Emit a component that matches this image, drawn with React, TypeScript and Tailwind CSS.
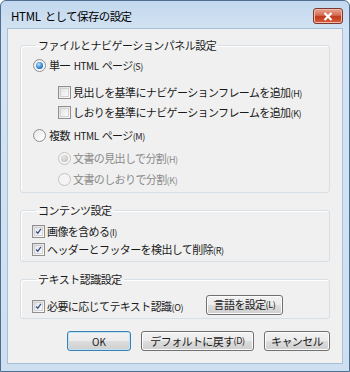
import React from 'react';

const font = "font-['Noto_Sans_CJK_JP','Noto_Sans',sans-serif]";

const Acc: React.FC<{ k: string }> = ({ k }) => (
  <span className="text-[9px] tracking-[-0.4px]">({k})</span>
);

const Radio: React.FC<{ checked?: boolean; disabled?: boolean }> = ({ checked, disabled }) => (
  <span
    className={`flex h-[13px] w-[13px] shrink-0 items-center justify-center rounded-full border ${
      disabled ? 'border-[#c4c4c4] bg-[#f4f4f4]' : 'border-[#8f8f8f] bg-[linear-gradient(135deg,#e8e8e8,#ffffff)]'
    }`}
  >
    {checked && (
      <span
        className={`h-[7px] w-[7px] rounded-full ${
          disabled
            ? 'bg-[radial-gradient(circle_at_40%_35%,#e6e6e6,#b8b8b8)]'
            : 'bg-[radial-gradient(circle_at_40%_35%,#b8e3ff,#1a6cc2_70%,#0f4f96)]'
        }`}
      />
    )}
  </span>
);

const Check: React.FC<{ checked?: boolean }> = ({ checked }) => (
  <span className="flex h-[13px] w-[13px] shrink-0 items-center justify-center border border-[#8f8f8f] bg-[linear-gradient(135deg,#dcdcdc,#ffffff)]">
    <span className="flex h-[9px] w-[9px] items-center justify-center border border-[#d2d2d2] bg-[linear-gradient(135deg,#e4e4e4,#fafafa)]">
      {checked && (
        <svg width="9" height="9" viewBox="0 0 9 9">
          <path d="M1.5 4.5 L3.6 6.8 L7.6 1.2" fill="none" stroke="#2f4f8f" strokeWidth="1.6" />
        </svg>
      )}
    </span>
  </span>
);

const Button: React.FC<{ className?: string; def?: boolean; children: React.ReactNode }> = ({ className, def, children }) => (
  <div
    className={`flex h-[20px] items-center justify-center rounded-[3px] border ${
      def
        ? 'border-[#3c7fb1] shadow-[inset_0_0_0_1px_#bfe3f7]'
        : 'border-[#707070] shadow-[inset_0_0_0_1px_#fcfcfc]'
    } bg-[linear-gradient(to_bottom,#f2f2f2_0%,#ebebeb_50%,#dddddd_51%,#cfcfcf_100%)] text-[11px] tracking-[-0.6px] text-[#1a1a1a] ${className ?? ''}`}
  >
    {children}
  </div>
);

const Group: React.FC<{ title: string; className?: string; children: React.ReactNode }> = ({ title, className, children }) => (
  <fieldset className={`rounded-[3px] border border-[#d5dfe5] px-[11px] pb-[3px] shadow-[inset_1px_1px_0_#ffffff] ${className ?? ''}`}>
    <legend className="ml-[4px] px-[2px] text-[11px] leading-[14px] tracking-[-0.5px] text-[#1a1a1a]">{title}</legend>
    {children}
  </fieldset>
);

export default function App() {
  return (
    <div className={`${font} flex h-[372px] w-[350px] flex-col rounded-t-[6px] border border-[#4d6f8f] bg-[linear-gradient(to_bottom,#c3d8ee,#d3e3f3_30px,#cddff1)]`}>
      <div className="flex h-[27px] shrink-0 items-center justify-between pl-[10px] pr-[6px]">
        <span className="pt-[5px] text-[11.5px] tracking-[-0.6px] text-[#000]">
          <span className="mr-[4px] tracking-[-0.3px]">HTML</span>として保存の設定
        </span>
        <div className="mt-[3px] flex h-[16px] w-[30px] items-center justify-center rounded-[3px] border border-[#7a3a30] bg-[linear-gradient(to_bottom,#e8a593,#d46b52_45%,#c0391b_55%,#d9613e)] shadow-[inset_0_0_0_1px_#f0b8a8]">
          <svg width="10" height="9" viewBox="0 0 10 9">
            <path d="M1.5 1 L8.5 8 M8.5 1 L1.5 8" stroke="#ffffff" strokeWidth="2.2" />
          </svg>
        </div>
      </div>
      <div className="mx-[6px] mb-[7px] flex flex-1 flex-col border border-[#a9bfd6] bg-[#f0f0f0] px-[12px] pt-[9px] text-[11px] tracking-[-0.6px] text-[#1a1a1a]">
        <Group title="ファイルとナビゲーションパネル設定">
          <div className="ml-[1px] mt-[3px] flex h-[20px] items-center gap-[3px]">
            <Radio checked />
            <span>
              単一<span className="ml-[4px] mr-[3px] text-[10px] tracking-[-0.5px]">HTML</span>ページ<Acc k="S" />
            </span>
          </div>
          <div className="ml-[26px] mt-[7px] flex h-[20px] items-center gap-[2px]">
            <Check />
            <span>
              見出しを基準にナビゲーションフレームを追加<Acc k="H" />
            </span>
          </div>
          <div className="ml-[26px] flex h-[20px] items-center gap-[2px]">
            <Check />
            <span>
              しおりを基準にナビゲーションフレームを追加<Acc k="K" />
            </span>
          </div>
          <div className="ml-[1px] mt-[3px] flex h-[20px] items-center gap-[3px]">
            <Radio />
            <span>
              複数<span className="ml-[4px] mr-[3px] text-[10px] tracking-[-0.5px]">HTML</span>ページ<Acc k="M" />
            </span>
          </div>
          <div className="ml-[26px] mt-[3px] flex h-[20px] items-center gap-[2px] text-[#8a8a8a]">
            <Radio checked disabled />
            <span>
              文書の見出しで分割<Acc k="H" />
            </span>
          </div>
          <div className="ml-[26px] mt-[1px] flex h-[20px] items-center gap-[2px] text-[#8a8a8a]">
            <Radio disabled />
            <span>
              文書のしおりで分割<Acc k="K" />
            </span>
          </div>
        </Group>

        <Group title="コンテンツ設定" className="mt-[10px]">
          <div className="mt-[5px] flex h-[18px] items-center gap-[2px]">
            <Check checked />
            <span>
              画像を含める<Acc k="I" />
            </span>
          </div>
          <div className="flex h-[18px] items-center gap-[2px]">
            <Check checked />
            <span>
              ヘッダーとフッターを検出して削除<Acc k="R" />
            </span>
          </div>
        </Group>

        <Group title="テキスト認識設定" className="mt-[10px]">
          <div className="mt-[8px] flex h-[21px] items-center">
            <div className="flex w-[174px] items-center gap-[2px] pt-[3px]">
              <Check checked />
              <span>
                必要に応じてテキスト認識<Acc k="O" />
              </span>
            </div>
            <Button className="w-[77px]">
              言語を設定<Acc k="L" />
            </Button>
          </div>
        </Group>

        <div className="mt-[12px] flex justify-end gap-[10px]">
          <Button def className="w-[64px]">
            <span className="text-[10px] tracking-[0px]">OK</span>
          </Button>
          <Button className="w-[113px]">
            デフォルトに戻す<Acc k="D" />
          </Button>
          <Button className="w-[66px]">キャンセル</Button>
        </div>
      </div>
    </div>
  );
}
